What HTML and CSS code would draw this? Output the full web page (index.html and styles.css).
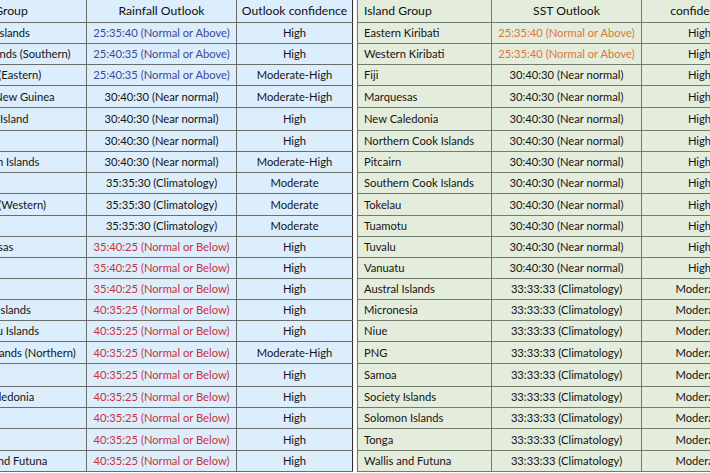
FILE: index.html
```html
<!DOCTYPE html>
<html>
<head>
<meta charset="utf-8">
<link rel="stylesheet" href="styles.css">
</head>
<body>
<div class="page">
  <table class="tbl rain">
    <colgroup><col class="c1"><col class="c2"><col class="c3"></colgroup>
    <tr class="head"><th class="name">Island Group</th><th>Rainfall Outlook</th><th>Outlook confidence</th></tr>
    <tr><td class="name">Gilbert Islands</td><td class="blue">25:35:40 (Normal or Above)</td><td>High</td></tr>
    <tr><td class="name">Line Islands (Southern)</td><td class="blue">25:40:35 (Normal or Above)</td><td>High</td></tr>
    <tr><td class="name">Kiribati (Eastern)</td><td class="blue">25:40:35 (Normal or Above)</td><td>Moderate-High</td></tr>
    <tr class="r22"><td class="name">Papua-New Guinea</td><td>30:40:30 (Near normal)</td><td>Moderate-High</td></tr>
    <tr class="r23"><td class="name">Norfolk Island</td><td>30:40:30 (Near normal)</td><td>High</td></tr>
    <tr><td class="name">Tonga</td><td>30:40:30 (Near normal)</td><td>High</td></tr>
    <tr><td class="name">Solomon Islands</td><td>30:40:30 (Near normal)</td><td>Moderate-High</td></tr>
    <tr><td class="name">Samoa</td><td>35:35:30 (Climatology)</td><td>Moderate</td></tr>
    <tr class="r22"><td class="name">Kiribati (Western)</td><td>35:35:30 (Climatology)</td><td>Moderate</td></tr>
    <tr><td class="name">Tuvalu</td><td>35:35:30 (Climatology)</td><td>Moderate</td></tr>
    <tr><td class="name">Marquesas</td><td class="red">35:40:25 (Normal or Below)</td><td>High</td></tr>
    <tr><td class="name">Niue</td><td class="red">35:40:25 (Normal or Below)</td><td>High</td></tr>
    <tr><td class="name">Tokelau</td><td class="red">35:40:25 (Normal or Below)</td><td>High</td></tr>
    <tr><td class="name">Austral Islands</td><td class="red">40:35:25 (Normal or Below)</td><td>High</td></tr>
    <tr><td class="name">Tuamotu Islands</td><td class="red">40:35:25 (Normal or Below)</td><td>High</td></tr>
    <tr class="r22"><td class="name">Cook Islands (Northern)</td><td class="red">40:35:25 (Normal or Below)</td><td>Moderate-High</td></tr>
    <tr class="r23"><td class="name">Fiji</td><td class="red">40:35:25 (Normal or Below)</td><td>High</td></tr>
    <tr><td class="name">New  Caledonia</td><td class="red">40:35:25 (Normal or Below)</td><td>High</td></tr>
    <tr><td class="name">Palau</td><td class="red">40:35:25 (Normal or Below)</td><td>High</td></tr>
    <tr class="r22"><td class="name">Pitcairn</td><td class="red">40:35:25 (Normal or Below)</td><td>High</td></tr>
    <tr><td class="name">Wallis and Futuna</td><td class="red">40:35:25 (Normal or Below)</td><td>High</td></tr>
  </table>
  <table class="tbl sst">
    <colgroup><col class="c1"><col class="c2"><col class="c3"></colgroup>
    <tr class="head"><th class="name">Island Group</th><th>SST Outlook</th><th>confidence</th></tr>
    <tr><td class="name">Eastern Kiribati</td><td class="orange">25:35:40 (Normal or Above)</td><td>High</td></tr>
    <tr><td class="name">Western Kiribati</td><td class="orange">25:35:40 (Normal or Above)</td><td>High</td></tr>
    <tr><td class="name">Fiji</td><td>30:40:30 (Near normal)</td><td>High</td></tr>
    <tr class="r22"><td class="name">Marquesas</td><td>30:40:30 (Near normal)</td><td>High</td></tr>
    <tr class="r23"><td class="name">New Caledonia</td><td>30:40:30 (Near normal)</td><td>High</td></tr>
    <tr><td class="name">Northern Cook Islands</td><td>30:40:30 (Near normal)</td><td>High</td></tr>
    <tr><td class="name">Pitcairn</td><td>30:40:30 (Near normal)</td><td>High</td></tr>
    <tr><td class="name">Southern Cook Islands</td><td>30:40:30 (Near normal)</td><td>High</td></tr>
    <tr class="r22"><td class="name">Tokelau</td><td>30:40:30 (Near normal)</td><td>High</td></tr>
    <tr><td class="name">Tuamotu</td><td>30:40:30 (Near normal)</td><td>High</td></tr>
    <tr><td class="name">Tuvalu</td><td>30:40:30 (Near normal)</td><td>High</td></tr>
    <tr><td class="name">Vanuatu</td><td>30:40:30 (Near normal)</td><td>High</td></tr>
    <tr><td class="name">Austral Islands</td><td>33:33:33 (Climatology)</td><td>Moderate</td></tr>
    <tr><td class="name">Micronesia</td><td>33:33:33 (Climatology)</td><td>Moderate</td></tr>
    <tr><td class="name">Niue</td><td>33:33:33 (Climatology)</td><td>Moderate</td></tr>
    <tr class="r22"><td class="name">PNG</td><td>33:33:33 (Climatology)</td><td>Moderate</td></tr>
    <tr class="r23"><td class="name">Samoa</td><td>33:33:33 (Climatology)</td><td>Moderate</td></tr>
    <tr><td class="name">Society Islands</td><td>33:33:33 (Climatology)</td><td>Moderate</td></tr>
    <tr><td class="name">Solomon Islands</td><td>33:33:33 (Climatology)</td><td>Moderate</td></tr>
    <tr class="r22"><td class="name">Tonga</td><td>33:33:33 (Climatology)</td><td>Moderate</td></tr>
    <tr><td class="name">Wallis and Futuna</td><td>33:33:33 (Climatology)</td><td>Moderate</td></tr>
  </table>
</div>
</body>
</html>
```

FILE: styles.css
```css
html, body {
  margin: 0;
  padding: 0;
  background: #ffffff;
  overflow: hidden;
}
.page {
  display: flex;
  flex-direction: row;
  align-items: flex-start;
  gap: 4px;
  margin-left: -47px;
  margin-top: -1px;
  width: 820px;
}
.tbl {
  border-collapse: collapse;
  table-layout: fixed;
  font-family: Lato, "Liberation Sans", sans-serif;
  font-size: 11.2px;
  color: #141414;
  flex: none;
  box-shadow: 0 1px 1px rgba(0,0,0,0.25);
}
.rain { width: 400px; }
.sst { width: 401px; }
.rain .c1 { width: 133px; }
.sst .c1 { width: 134px; }
.tbl .c2 { width: 150px; }
.tbl .c3 { width: 116px; }
.tbl th, .tbl td {
  border: 1px solid #6a6d6a;
  height: 20px;
  padding: 0 2px;
  text-align: center;
  vertical-align: middle;
  white-space: nowrap;
  overflow: hidden;
  font-weight: normal;
  line-height: 14px;
}
.tbl .head th {
  height: 22px;
  font-size: 12.2px;
  color: #111;
}
.tbl .name {
  text-align: left;
  padding-left: 6px;
}
.tbl .r22 td { height: 21px; }
.tbl .r23 td { height: 22px; }
.rain { background: #dcedfb; }
.rain th:last-child, .rain td:last-child { border-right-color: #2e2e2e; }
.sst { background: #e4ecdc; }
.sst th, .sst td { border-color: #737a6e; }
.blue { color: #3c4a9a; }
.red { color: #c9323c; }
.orange { color: #e0743a; }
```
